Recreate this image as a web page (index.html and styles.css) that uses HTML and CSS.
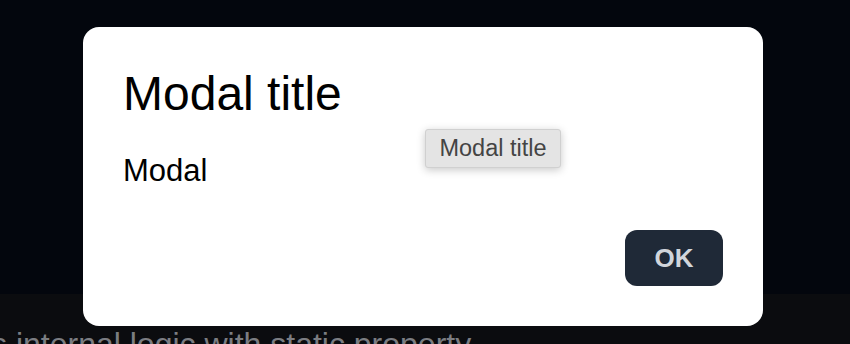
FILE: index.html
```html
<!DOCTYPE html>
<html lang="en">
<head>
<meta charset="utf-8">
<title>Modal</title>
<link rel="stylesheet" href="styles.css">
</head>
<body>
  <div class="page">
    <div class="page-top"></div>
    <div class="page-band">
      <p class="band-text">s internal logic with static property</p>
    </div>
  </div>
  <div class="modal">
    <h1 class="modal-title">Modal title</h1>
    <p class="modal-body">Modal</p>
    <div class="modal-footer">
      <button class="ok-btn">OK</button>
    </div>
  </div>
  <div class="tooltip">Modal title</div>
</body>
</html>
```

FILE: styles.css
```css
html, body {
  margin: 0;
  padding: 0;
  width: 850px;
  height: 344px;
  overflow: hidden;
  background: #03060d;
  font-family: "Liberation Sans", Arial, Helvetica, sans-serif;
}

.page {
  display: flex;
  flex-direction: column;
  height: 344px;
}

.page-top {
  height: 294px;
  background: #03060d;
}

.page-band {
  flex: 1;
  background: #0b0c0f;
  overflow: hidden;
}

.band-text {
  margin: 0;
  padding-top: 32px;
  font-size: 32px;
  line-height: 37px;
  color: #7b7d82;
  white-space: nowrap;
  text-indent: -9px;
}

.modal {
  position: absolute;
  z-index: 10;
  left: 83px;
  top: 27px;
  width: 680px;
  height: 299px;
  box-sizing: border-box;
  padding: 39px 40px 40px;
  background: #ffffff;
  border-radius: 16px;
  display: flex;
  flex-direction: column;
}

.modal-title {
  margin: 0;
  font-size: 48px;
  font-weight: 400;
  line-height: 55px;
  color: #000;
}

.modal-body {
  margin: 33px 0 0;
  font-size: 31px;
  line-height: 34px;
  color: #000;
}

.modal-footer {
  margin-top: auto;
  display: flex;
  justify-content: flex-end;
}

.ok-btn {
  width: 98px;
  height: 56px;
  border: none;
  border-radius: 12px;
  background: #1f2937;
  color: #d1d5db;
  font-family: "Liberation Sans", Arial, Helvetica, sans-serif;
  font-weight: 700;
  font-size: 26px;
  padding: 0;
}

.tooltip {
  position: absolute;
  z-index: 20;
  left: 425px;
  top: 129px;
  width: 136px;
  height: 39px;
  box-sizing: border-box;
  display: flex;
  align-items: center;
  justify-content: center;
  background: #e4e4e4;
  border: 1px solid #d0d0d0;
  border-radius: 3px;
  box-shadow: 0 2px 8px rgba(0, 0, 0, 0.22);
  font-size: 23.5px;
  color: #444;
}
```
